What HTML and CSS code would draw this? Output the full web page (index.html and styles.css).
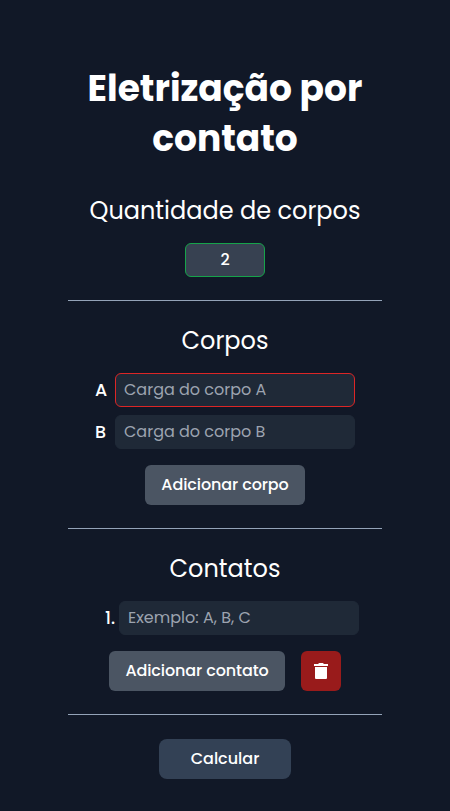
FILE: index.html
```html
<!DOCTYPE html>
<html lang="pt-BR">
<head>
<meta charset="utf-8">
<meta name="viewport" content="width=device-width, initial-scale=1">
<title>Eletrização por contato</title>
<link rel="stylesheet" href="styles.css">
</head>
<body>
<main class="page">
  <h1 class="title">Eletrização por<br>contato</h1>
  <section class="section">
    <h2 class="heading">Quantidade de corpos</h2>
    <input class="field amount" type="text" value="2">
  </section>
  <section class="section">
    <h2 class="heading">Corpos</h2>
    <div class="bodies">
      <label class="row"><span class="name">A</span><input class="field wide invalid" type="text" placeholder="Carga do corpo A"></label>
      <label class="row"><span class="name">B</span><input class="field wide" type="text" placeholder="Carga do corpo B"></label>
    </div>
    <button class="button add-body">Adicionar corpo</button>
  </section>
  <section class="section">
    <h2 class="heading">Contatos</h2>
    <label class="row contact"><span class="number">1.</span><input class="field wide" type="text" placeholder="Exemplo: A, B, C"></label>
    <div class="actions">
      <button class="button add-contact">Adicionar contato</button>
      <button class="button remove" aria-label="Remover contato">
        <svg width="14" height="16" viewBox="0 0 14 16" fill="#fff"><path d="M0 1h4.2l.5-.7Q4.9 0 5.300 0h3.400q.4 0 .6.300l.5.700H14v2H0zM1 4h12v11q0 1-1 1H2q-1 0-1-1z"/></svg>
      </button>
    </div>
  </section>
  <button class="button calculate">Calcular</button>
</main>
</body>
</html>
```
FILE: styles.css
```css
* { box-sizing: border-box; }
body {
  margin: 0;
  background: #111827;
  color: #fff;
  font: 500 16px/24px Poppins, Inter, sans-serif;
}
.page {
  width: 314px;
  min-height: 811px;
  margin: 0 auto;
  padding-top: 64px;
  display: flex;
  flex-direction: column;
  align-items: center;
}
.title {
  margin: 0 0 31px;
  font-size: 36px;
  line-height: 50px;
  font-weight: 700;
  text-align: center;
  white-space: nowrap;
}
.section {
  width: 100%;
  display: flex;
  flex-direction: column;
  align-items: center;
  margin-bottom: 24px;
  padding-bottom: 23px;
  border-bottom: 1px solid #94a3b8;
}
.heading {
  margin: 0 0 16px;
  font-size: 24px;
  line-height: 32px;
  font-weight: 400;
  white-space: nowrap;
}
.field {
  height: 34px;
  padding: 0 8px 2px;
  border: 1px solid #1f2937;
  border-radius: 6px;
  background: #1f2937;
  color: #fff;
  font: inherit;
  outline: 0;
}
.field::placeholder { color: #9ca3af; font-weight: 400; opacity: 1; }
.amount { width: 80px; border-color: #16a34a; background: #374151; text-align: center; }
.wide { width: 240px; }
.invalid { border-color: #dc2626; }
.bodies { display: grid; gap: 8px; margin-bottom: 16px; }
.row { display: flex; align-items: center; }
.name { width: 20px; font-size: 17.5px; }
.number { width: 14px; font-size: 17px; }
.contact { margin: 0 0 16px 14px; }
.actions { display: flex; gap: 16px; }
.button {
  height: 40px;
  padding: 0;
  border: 0;
  border-radius: 6px;
  background: #4b5563;
  color: #fff;
  font: inherit;
  letter-spacing: -0.1px;
  white-space: nowrap;
}
.add-body { width: 160px; }
.add-contact { width: 176px; }
.remove { width: 40px; display: grid; place-items: center; background: #991b1b; }
.calculate { width: 132px; border-radius: 8px; background: #334155; letter-spacing: 0; }
```
